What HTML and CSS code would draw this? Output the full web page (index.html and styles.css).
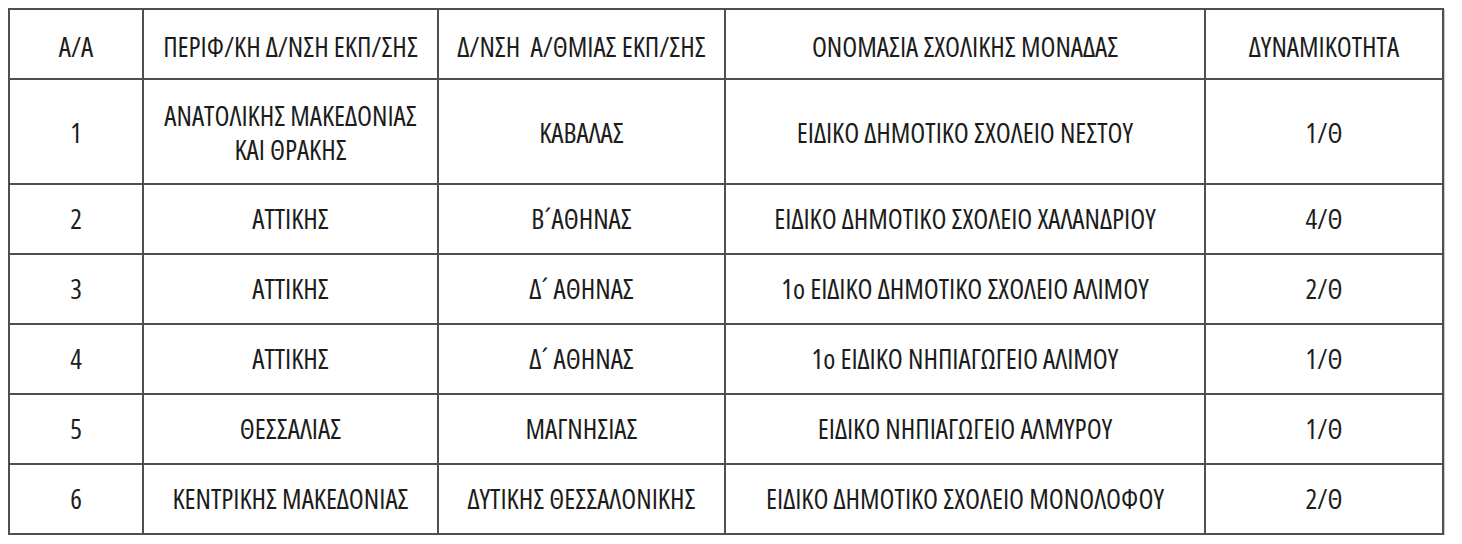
FILE: index.html
```html
<!DOCTYPE html>
<html lang="el">
<head>
<meta charset="utf-8">
<title>Πίνακας σχολικών μονάδων</title>
<link rel="stylesheet" href="styles.css">
</head>
<body>
<table class="schools">
  <colgroup>
    <col class="c-aa">
    <col class="c-region">
    <col class="c-dir">
    <col class="c-name">
    <col class="c-cap">
  </colgroup>
  <thead>
    <tr class="head-row">
      <th>Α/Α</th>
      <th>ΠΕΡΙΦ/ΚΗ Δ/ΝΣΗ ΕΚΠ/ΣΗΣ</th>
      <th>Δ/ΝΣΗ &nbsp;Α/ΘΜΙΑΣ ΕΚΠ/ΣΗΣ</th>
      <th>ΟΝΟΜΑΣΙΑ ΣΧΟΛΙΚΗΣ ΜΟΝΑΔΑΣ</th>
      <th>ΔΥΝΑΜΙΚΟΤΗΤΑ</th>
    </tr>
  </thead>
  <tbody>
    <tr class="tall-row">
      <td>1</td>
      <td>ΑΝΑΤΟΛΙΚΗΣ ΜΑΚΕΔΟΝΙΑΣ<br>ΚΑΙ ΘΡΑΚΗΣ</td>
      <td>ΚΑΒΑΛΑΣ</td>
      <td>ΕΙΔΙΚΟ ΔΗΜΟΤΙΚΟ ΣΧΟΛΕΙΟ ΝΕΣΤΟΥ</td>
      <td>1/Θ</td>
    </tr>
    <tr>
      <td>2</td>
      <td>ΑΤΤΙΚΗΣ</td>
      <td>Β´ΑΘΗΝΑΣ</td>
      <td>ΕΙΔΙΚΟ ΔΗΜΟΤΙΚΟ ΣΧΟΛΕΙΟ ΧΑΛΑΝΔΡΙΟΥ</td>
      <td>4/Θ</td>
    </tr>
    <tr>
      <td>3</td>
      <td>ΑΤΤΙΚΗΣ</td>
      <td>Δ´ ΑΘΗΝΑΣ</td>
      <td>1ο ΕΙΔΙΚΟ ΔΗΜΟΤΙΚΟ ΣΧΟΛΕΙΟ ΑΛΙΜΟΥ</td>
      <td>2/Θ</td>
    </tr>
    <tr>
      <td>4</td>
      <td>ΑΤΤΙΚΗΣ</td>
      <td>Δ´ ΑΘΗΝΑΣ</td>
      <td>1ο ΕΙΔΙΚΟ ΝΗΠΙΑΓΩΓΕΙΟ ΑΛΙΜΟΥ</td>
      <td>1/Θ</td>
    </tr>
    <tr>
      <td>5</td>
      <td>ΘΕΣΣΑΛΙΑΣ</td>
      <td>ΜΑΓΝΗΣΙΑΣ</td>
      <td>ΕΙΔΙΚΟ ΝΗΠΙΑΓΩΓΕΙΟ ΑΛΜΥΡΟΥ</td>
      <td>1/Θ</td>
    </tr>
    <tr>
      <td>6</td>
      <td>ΚΕΝΤΡΙΚΗΣ ΜΑΚΕΔΟΝΙΑΣ</td>
      <td>ΔΥΤΙΚΗΣ ΘΕΣΣΑΛΟΝΙΚΗΣ</td>
      <td>ΕΙΔΙΚΟ ΔΗΜΟΤΙΚΟ ΣΧΟΛΕΙΟ ΜΟΝΟΛΟΦΟΥ</td>
      <td>2/Θ</td>
    </tr>
  </tbody>
</table>
</body>
</html>
```
FILE: styles.css
```css
html, body {
  background: #ffffff;
}
body {
  margin: 8px;
  font-family: "Open Sans", "DejaVu Sans", sans-serif;
  font-stretch: 75%;
  font-size: 27.5px;
  color: #1c1c1c;
}
.schools {
  table-layout: fixed;
  width: 1436px;
  border-collapse: separate;
  border-spacing: 0;
  border-top: 2px solid #4f4f4f;
  border-left: 2px solid #4f4f4f;
  box-shadow: 1px 1px 0 #c9c9c9;
}
.c-aa { width: 134px; }
.c-region { width: 295px; }
.c-dir { width: 287px; }
.c-name { width: 480px; }
.c-cap { width: 238px; }

.schools th,
.schools td {
  box-sizing: border-box;
  border-right: 2px solid #4f4f4f;
  border-bottom: 2px solid #4f4f4f;
  padding: 0;
  text-align: center;
  vertical-align: middle;
  font-weight: 400;
  line-height: 34px;
  white-space: nowrap;
}
.schools tr {
  height: 70px;
}
.schools .head-row th {
  padding-top: 5px;
}
.schools .tall-row {
  height: 105px;
}
.schools .tall-row td {
  padding-top: 3px;
}
```
